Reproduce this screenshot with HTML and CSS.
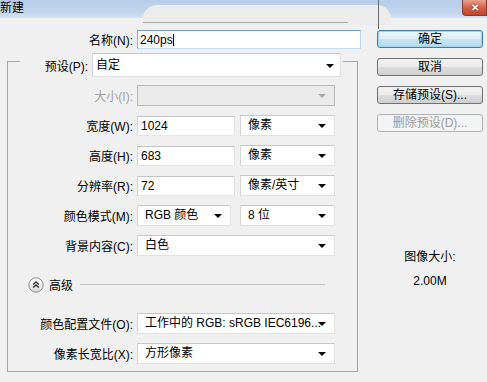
FILE: index.html
```html
<!DOCTYPE html>
<html lang="zh-CN">
<head>
    <meta charset="UTF-8">
    <title>新建</title>
    <link rel="stylesheet" href="styles.css">
</head>
<body>
    <div class="window">
        <div class="titlebar">
            <span class="title">新建</span>
            <button class="close" title="关闭">&#10005;</button>
        </div>
        <!-- leftover shapes from the window behind the dialog -->
        <div class="ghost-tab"></div>
        <div class="ghost-line"></div>
        <div class="ghost-edge"></div>

        <div class="dialog">
            <div class="main">
                <div class="name-row">
                    <label class="name-label">名称(N):</label>
                    <div class="field name-field">240ps<span class="caret"></span></div>
                </div>

                <div class="group">
                    <div class="preset-row">
                        <label class="preset-label">预设(P):</label>
                        <div class="select preset-select">自定</div>
                    </div>

                    <div class="rows">
                        <div class="row">
                            <label class="lbl disabled">大小(I):</label>
                            <div class="select full is-disabled"></div>
                        </div>
                        <div class="row">
                            <label class="lbl">宽度(W):</label>
                            <div class="field num">1024</div>
                            <div class="select unit">像素</div>
                        </div>
                        <div class="row">
                            <label class="lbl">高度(H):</label>
                            <div class="field num">683</div>
                            <div class="select unit">像素</div>
                        </div>
                        <div class="row">
                            <label class="lbl">分辨率(R):</label>
                            <div class="field num">72</div>
                            <div class="select unit">像素/英寸</div>
                        </div>
                        <div class="row">
                            <label class="lbl">颜色模式(M):</label>
                            <div class="select mode">RGB 颜色</div>
                            <div class="select unit bits">8 位</div>
                        </div>
                        <div class="row">
                            <label class="lbl">背景内容(C):</label>
                            <div class="select full">白色</div>
                        </div>

                        <div class="row advanced">
                            <span class="toggle">
                                <svg width="16" height="16" viewBox="0 0 16 16">
                                    <defs>
                                        <linearGradient id="tg" x1="0" y1="0" x2="0" y2="1">
                                            <stop offset="0" stop-color="#ffffff"/>
                                            <stop offset="1" stop-color="#d6d6d6"/>
                                        </linearGradient>
                                    </defs>
                                    <circle cx="8" cy="8" r="7.2" fill="url(#tg)" stroke="#8e8e8e" stroke-width="1"/>
                                    <path d="M5.2 7.4 L8 4.8 L10.8 7.4 M5.2 10.6 L8 8 L10.8 10.6" fill="none" stroke="#2b2b2b" stroke-width="1.3"/>
                                </svg>
                            </span>
                            <span class="adv-text">高级</span>
                            <span class="adv-line"></span>
                        </div>

                        <div class="row">
                            <label class="lbl">颜色配置文件(O):</label>
                            <div class="select full">工作中的 RGB: sRGB IEC6196...</div>
                        </div>
                        <div class="row">
                            <label class="lbl">像素长宽比(X):</label>
                            <div class="select full">方形像素</div>
                        </div>
                    </div>
                </div>
            </div>

            <div class="side">
                <button class="btn default">确定</button>
                <button class="btn">取消</button>
                <button class="btn">存储预设(S)...</button>
                <button class="btn" disabled>删除预设(D)...</button>

                <div class="image-size">
                    <div>图像大小:</div>
                    <div class="size-value">2.00M</div>
                </div>
            </div>
        </div>
    </div>
</body>
</html>
```

FILE: styles.css
```css
* {
    box-sizing: border-box;
}

body {
    margin: 0;
    width: 487px;
    height: 382px;
    overflow: hidden;
    background: #f0f0f0;
    font-family: 'Liberation Sans', 'Noto Sans CJK SC', sans-serif;
    font-size: 12px;
    color: #000;
}

.window {
    position: relative;
    height: 382px;
}

/* Title bar */
.titlebar {
    height: 18px;
    display: flex;
    align-items: flex-start;
    background: linear-gradient(#b6cce8, #c3d6ed 70%, #d6e3f2);
}

.title {
    line-height: 16px;
    position: relative;
    z-index: 2;
}

.close {
    margin-left: auto;
    width: 25px;
    height: 16px;
    padding: 0;
    border: 1px solid #8c3a2c;
    border-top: none;
    border-radius: 0 0 0 4px;
    background: linear-gradient(#e8a08e, #d2644b 50%, #c0432a);
    color: #fff;
    font-size: 10px;
    font-weight: bold;
    line-height: 14px;
    text-shadow: 0 0 2px #6b1d10;
}

.ghost-tab {
    position: absolute;
    left: 143px;
    top: 5px;
    width: 248px;
    height: 20px;
    background: #ececec;
    border-radius: 14px 14px 0 0;
}

.ghost-line {
    position: absolute;
    left: 143px;
    top: 22px;
    width: 205px;
    height: 1px;
    background: #a8a8a8;
}

.ghost-edge {
    position: absolute;
    left: 378px;
    top: 0;
    width: 1px;
    height: 29px;
    background: #6c6c6c;
}

/* Dialog body */
.dialog {
    display: flex;
    position: relative;
}

.main {
    width: 377px;
    padding-top: 12px;
}

.name-row {
    display: flex;
    align-items: center;
    height: 19px;
}

.name-label {
    width: 133px;
    text-align: right;
    margin-right: 4px;
}

.field {
    height: 20px;
    line-height: 18px;
    padding-left: 3px;
    background: #fff;
    border: 1px solid;
    border-color: #c4c4c4 #e1e1e1 #e6e6e6 #d6d6d6;
    white-space: nowrap;
}

.name-field {
    width: 224px;
    height: 19px;
    padding-left: 2px;
    border-color: #6d9cc8 #b9d3ea #c6ddf0 #8cb4d8;
}

.caret {
    display: inline-block;
    width: 1px;
    height: 12px;
    background: #000;
    vertical-align: -2px;
}

.select {
    position: relative;
    height: 21px;
    line-height: 19px;
    padding-left: 7px;
    background: #fff;
    border: 1px solid;
    border-color: #c8c8c8 #e2e2e2 #e2e2e2 #d4d4d4;
    white-space: nowrap;
}

.select::after {
    content: '';
    position: absolute;
    right: 8px;
    top: 8px;
    border-left: 4px solid transparent;
    border-right: 4px solid transparent;
    border-top: 4px solid #000;
}

.select.is-disabled {
    background: #ebebeb;
    border-color: #b9b9b9;
}

.select.is-disabled::after {
    border-top-color: #a9a9a9;
}

/* Group box */
.group {
    margin: 12px 0 0 7px;
    width: 351px;
    border: 1px solid #a6a6a6;
}

.preset-row {
    display: flex;
    align-items: center;
    margin: -9px 0 0 12px;
    width: 323px;
    height: 24px;
    background: #f0f0f0;
}

.preset-label {
    width: 68px;
    text-align: right;
    margin-right: 4px;
}

.preset-select {
    width: 249px;
    height: 24px;
    line-height: 22px;
    padding-left: 3px;
}

.preset-select::after {
    top: 10px;
    right: 6px;
}

.rows {
    display: flex;
    flex-direction: column;
    gap: 9px;
    margin-top: 8px;
    padding-bottom: 7px;
}

.row {
    display: flex;
    align-items: center;
    height: 21px;
}

.lbl {
    width: 125px;
    margin-right: 4px;
    text-align: right;
    white-space: nowrap;
}

.lbl.disabled {
    color: #a0a0a0;
}

.full {
    width: 198px;
}

.num {
    width: 98px;
}

.unit {
    width: 95px;
    margin-left: 5px;
}

.mode {
    width: 94px;
}

.bits {
    margin-left: 9px;
}

/* Advanced divider */
.row.advanced {
    height: 39px;
}

.toggle {
    margin-left: 20px;
    width: 16px;
    height: 16px;
}

.toggle svg {
    display: block;
}

.adv-text {
    margin-left: 5px;
}

.adv-line {
    flex: 1;
    height: 1px;
    margin: 0 32px 0 7px;
    background: #c2c2c2;
}

/* Right column */
.side {
    width: 106px;
    padding-top: 12px;
    display: flex;
    flex-direction: column;
    gap: 10px;
}

.btn {
    height: 18px;
    padding: 0;
    font: inherit;
    line-height: 16px;
    color: #000;
    border: 1px solid #707070;
    border-radius: 3px;
    background: linear-gradient(#f2f2f2, #ebebeb 49%, #dddddd 50%, #cfcfcf);
}

.btn.default {
    border-color: #3c7fb1;
    background: linear-gradient(#eaf6fd, #dbeef8 49%, #c9e4f3 50%, #b8d9ec);
    box-shadow: inset 0 0 0 1px #9fd4f0;
}

.btn:disabled {
    color: #9a9a9a;
    border-color: #adb2b5;
    background: #f4f4f4;
}

.image-size {
    margin-top: 107px;
    text-align: center;
    line-height: 16px;
}

.size-value {
    margin-top: 8px;
}
```
